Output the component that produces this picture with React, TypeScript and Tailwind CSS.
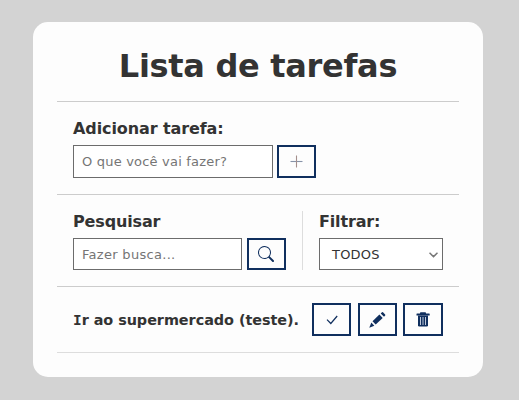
import type { ReactNode } from "react";
import { BsSearch } from "react-icons/bs";

function IconButton({ label, className = "w-[39px]", children }: { label: string; className?: string; children: ReactNode }) {
  return (
    <button
      aria-label={label}
      className={`flex shrink-0 items-center justify-center border-2 border-[#102f5e] bg-[#fdfdfd] text-[#102f5e] ${className}`}
    >
      {children}
    </button>
  );
}

function PlusIcon() {
  return (
    <svg width="13" height="13" viewBox="0 0 13 13" fill="none">
      <path d="M.5 6.5h12" stroke="#8793a8" strokeWidth="1.1" />
      <path d="M6.5.5v12" stroke="#a48f8c" strokeWidth="1.1" />
    </svg>
  );
}

function CheckIcon() {
  return (
    <svg width="17" height="17" viewBox="0 0 17 17" fill="none" stroke="currentColor" strokeWidth="1.2">
      <path d="M4 8.7 7.8 12.5 14.2 5" />
    </svg>
  );
}

function PencilIcon() {
  return (
    <svg width="17" height="17" viewBox="0 0 17 17" fill="currentColor">
      <path d="M3.5 10.2 10.4 3.6 13.7 6.9 6.7 13.5z" />
      <path d="M11.7 2.5 13 1.2q.5-.4 1 .1l2.1 2.1q.5.5.1 1L15 5.7z" />
      <path d="M2.3 11.5 5.3 14.7.3 16.8z" />
    </svg>
  );
}

function TrashIcon() {
  return (
    <svg width="14" height="17" viewBox="0 0 14 17">
      <path d="M4 2.5V2q0-.8.8-.8h4.4q.8 0 .8.8v.5h3.3q.4 0 .4.4v1.7H.5V2.9q0-.4.4-.4z" fill="currentColor" />
      <path d="M2 4.5h10v9.7q0 1.3-1.3 1.3H3.3Q2 15.5 2 14.2z" fill="currentColor" />
      <path d="M4.5 6v8M7 6v8M9.5 6v8" stroke="#d4dae8" strokeWidth=".9" />
    </svg>
  );
}

export default function App() {
  return (
    <div className="h-[400px] w-[519px] bg-[#d3d3d3] pt-[22px] pl-[33px] font-['DejaVu_Sans',sans-serif] text-[#333]">
      <main className="h-[355px] w-[450px] rounded-[15px] bg-[#fdfdfd] px-6">
        <header className="h-20 border-b border-[#ccc] pt-[25px] text-center">
          <h1 className="text-[32px] leading-[38px] font-bold tracking-[-0.3px] whitespace-nowrap">Lista de tarefas</h1>
        </header>

        <form className="h-[93px] border-b border-[#ccc] px-4 pt-[17px]">
          <label className="block h-[26px] text-base leading-5 font-bold tracking-[-0.1px]">Adicionar tarefa:</label>
          <div className="flex h-[33px] gap-1">
            <input
              placeholder="O que você vai fazer?"
              className="w-[200px] border border-[#6c6c6c] bg-white px-2 text-[13px] tracking-[0.2px] placeholder:text-[#757575]"
            />
            <IconButton label="Adicionar">
              <PlusIcon />
            </IconButton>
          </div>
        </form>

        <div className="flex h-[92px] border-b border-[#ccc] px-4 pt-4">
          <div className="h-[59px] w-[230px] border-r border-[#ddd] pt-px">
            <h2 className="h-[26px] text-base leading-5 font-bold tracking-[-0.15px]">Pesquisar</h2>
            <div className="flex h-8 gap-[5px]">
              <input
                placeholder="Fazer busca..."
                className="w-[169px] border border-[#6c6c6c] bg-white px-2 pt-px text-[13px] tracking-[0.3px] placeholder:text-[#757575]"
              />
              <IconButton label="Pesquisar" className="w-[39px] pr-px">
                <BsSearch size={16} />
              </IconButton>
            </div>
          </div>
          <div className="ml-4 w-[124px] pt-px">
            <h2 className="h-[26px] text-base leading-5 font-bold tracking-[-0.15px]">Filtrar:</h2>
            <div className="flex h-8 items-center justify-between border border-[#6c6c6c] bg-white pt-px pr-1 pl-3 text-[13px] tracking-[0.2px]">
              <span>TODOS</span>
              <svg width="9" height="6" viewBox="0 0 9 6" fill="none" stroke="#777" strokeWidth="1.5">
                <path d="M.5.8 4.5 4.6 8.5.8" />
              </svg>
            </div>
          </div>
        </div>

        <div className="flex h-[66px] items-start border-b border-[#ddd] px-4 pt-4">
          <h3 className="w-[239px] text-[14.4px] leading-[34px] font-bold tracking-[-0.04px] whitespace-nowrap">
            <span className="font-['DejaVu_Sans_Mono',monospace]">I</span>r ao supermercado (teste).
          </h3>
          <IconButton label="Concluir" className="h-[33px] w-[39px]">
            <CheckIcon />
          </IconButton>
          <IconButton label="Editar" className="ml-[7px] h-[33px] w-[39px]">
            <PencilIcon />
          </IconButton>
          <IconButton label="Excluir" className="ml-1.5 h-[33px] w-[40px]">
            <TrashIcon />
          </IconButton>
        </div>
      </main>
    </div>
  );
}
